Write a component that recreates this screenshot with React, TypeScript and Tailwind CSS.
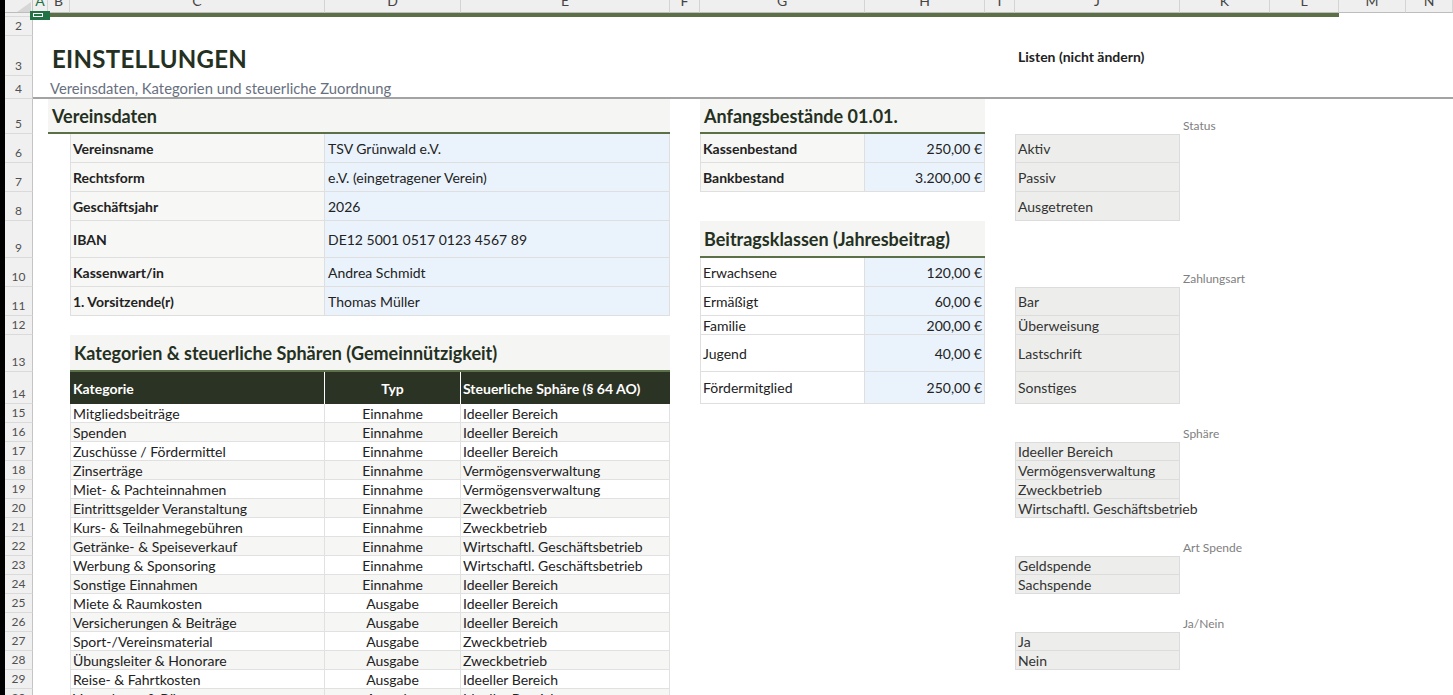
import type { ReactNode } from "react";

// column template: black strip, row header, A … N
const GRID =
  "grid grid-rows-1 *:row-start-1 grid-cols-[5px_28px_15px_22px_255px_136px_209px_30px_165px_120px_30px_165px_90px_69px_67px_1fr]";

const colLetters = ["A", "B", "C", "D", "E", "F", "G", "H", "I", "J", "K", "L", "M", "N"];

const secHead =
  "flex items-center whitespace-nowrap border-b-2 border-[#5b7047] bg-[#f5f5f3] px-[4px] text-[18px] leading-[22px] font-bold text-[#243021]";
const lbl =
  "flex items-center whitespace-nowrap border-b border-l border-r border-[#dfdfdf] bg-[#f7f7f5] px-[2px] text-[14px] leading-[17px] font-bold";
const lblPlain =
  "flex items-center whitespace-nowrap border-b border-l border-r border-[#dfdfdf] bg-white px-[2px] text-[14px] leading-[17px]";
const val =
  "flex items-center whitespace-nowrap border-b border-r border-[#dfdfdf] bg-[#eaf3fc] px-[3px] text-[14px] leading-[17px]";
const valR =
  "flex items-center justify-end whitespace-nowrap border-b border-r border-[#dfdfdf] bg-[#eaf3fc] px-[2px] text-[14px] leading-[17px]";
const listCell =
  "flex items-center whitespace-nowrap border-b border-l border-r border-[#dcdcdc] bg-[#edeeeb] px-[2px] text-[14px] leading-[17px] text-[#333]";
const listFirst =
  "flex items-center whitespace-nowrap border-t border-b border-l border-r border-[#dcdcdc] bg-[#edeeeb] px-[2px] text-[14px] leading-[17px] text-[#333]";
const smallLabel =
  "flex items-end whitespace-nowrap px-[3px] pb-[1px] text-[12px] leading-[14px] text-[#808080]";
const headCell = "flex items-center bg-[#2b3324] pt-[1px] text-[14px] leading-[17px] font-bold text-white";

const categories = [
  { n: 15, name: "Mitgliedsbeiträge", typ: "Einnahme", sphere: "Ideeller Bereich" },
  { n: 16, name: "Spenden", typ: "Einnahme", sphere: "Ideeller Bereich", note: "Sphäre" },
  { n: 17, name: "Zuschüsse / Fördermittel", typ: "Einnahme", sphere: "Ideeller Bereich", list: "Ideeller Bereich", first: true },
  { n: 18, name: "Zinserträge", typ: "Einnahme", sphere: "Vermögensverwaltung", list: "Vermögensverwaltung" },
  { n: 19, name: "Miet- & Pachteinnahmen", typ: "Einnahme", sphere: "Vermögensverwaltung", list: "Zweckbetrieb" },
  { n: 20, name: "Eintrittsgelder Veranstaltung", typ: "Einnahme", sphere: "Zweckbetrieb", list: "Wirtschaftl. Geschäftsbetrieb" },
  { n: 21, name: "Kurs- & Teilnahmegebühren", typ: "Einnahme", sphere: "Zweckbetrieb" },
  { n: 22, name: "Getränke- & Speiseverkauf", typ: "Einnahme", sphere: "Wirtschaftl. Geschäftsbetrieb", note: "Art Spende" },
  { n: 23, name: "Werbung & Sponsoring", typ: "Einnahme", sphere: "Wirtschaftl. Geschäftsbetrieb", list: "Geldspende", first: true },
  { n: 24, name: "Sonstige Einnahmen", typ: "Einnahme", sphere: "Ideeller Bereich", list: "Sachspende" },
  { n: 25, name: "Miete & Raumkosten", typ: "Ausgabe", sphere: "Ideeller Bereich" },
  { n: 26, name: "Versicherungen & Beiträge", typ: "Ausgabe", sphere: "Ideeller Bereich", note: "Ja/Nein" },
  { n: 27, name: "Sport-/Vereinsmaterial", typ: "Ausgabe", sphere: "Zweckbetrieb", list: "Ja", first: true },
  { n: 28, name: "Übungsleiter & Honorare", typ: "Ausgabe", sphere: "Zweckbetrieb", list: "Nein" },
  { n: 29, name: "Reise- & Fahrtkosten", typ: "Ausgabe", sphere: "Ideeller Bereich" },
  { n: 30, name: "Verwaltung & Büro", typ: "Ausgabe", sphere: "Ideeller Bereich" },
];

function Row({ n, h, children }: { n?: number; h: string; children?: ReactNode }) {
  return (
    <div className={`${GRID} ${h}`}>
      <div className="col-start-1 bg-black" />
      <div className="col-start-2 flex items-end justify-center border-r border-b border-r-[#c4c4c4] border-b-[#dadada] bg-[#f0f0f0] pb-[3px] text-[12px] leading-[13px] text-[#505050]">
        {n}
      </div>
      {children}
    </div>
  );
}

export default function App() {
  return (
    <div className="h-[695px] w-[1453px] overflow-hidden bg-white font-[Lato,sans-serif] text-[#222]">
      {/* column headers, cut at the top as in the sheet */}
      <div className={`${GRID} h-[13px]`}>
        <div className="bg-black" />
        <div className="flex items-end justify-end border-r border-b border-r-[#c4c4c4] border-b-[#bdbdbd] bg-[#efefef] pr-[1px]">
          <svg width="14" height="10" viewBox="0 0 14 10">
            <polygon points="14,0 14,10 0,10" fill="#d6d6d6" />
          </svg>
        </div>
        {colLetters.map((c) => (
          <div
            key={c}
            className={`flex items-end justify-center overflow-hidden border-r border-b border-r-[#d4d4d4] border-b-[#bdbdbd] bg-[#efefef] pb-[4px] text-[14px] leading-[14px] ${
              c === "A" ? "text-[#217346]" : "text-[#444]"
            }`}
          >
            {c}
          </div>
        ))}
      </div>

      {/* row 1: green band with cell selection */}
      <Row h="h-[4px]">
        <div className="relative col-start-3 col-span-12 bg-[#5b7047]">
          <div className="absolute -top-[2px] -left-[3px] z-10 h-[9px] w-[20px] bg-[#217346]">
            <div className="absolute top-[2px] left-[3px] h-[4px] w-[10px] border border-white" />
          </div>
        </div>
      </Row>

      <Row n={2} h="h-[19px]" />

      <Row n={3} h="h-[40px]">
        <div className="col-start-4 col-span-4 flex items-center whitespace-nowrap px-[4px] pt-[6px] text-[24px] font-bold tracking-[0.3px] text-[#243021]">
          EINSTELLUNGEN
        </div>
        <div className="col-start-12 col-span-2 flex items-center whitespace-nowrap px-[3px] text-[14px] font-bold">
          Listen (nicht ändern)
        </div>
      </Row>

      <Row n={4} h="h-[23px]">
        <div className="col-start-3 col-span-14 flex items-center whitespace-nowrap border-b-2 border-[#a3a3a3] pt-[2px] pl-[17px] text-[14.8px] leading-[18px] text-[#687080]">
          Vereinsdaten, Kategorien und steuerliche Zuordnung
        </div>
      </Row>

      <Row n={5} h="h-[35px]">
        <div className={`col-start-4 col-span-4 ${secHead}`}>Vereinsdaten</div>
        <div className={`col-start-9 col-span-2 ${secHead}`}>Anfangsbestände 01.01.</div>
        <div className={`col-start-13 ${smallLabel}`}>Status</div>
      </Row>

      <Row n={6} h="h-[29px]">
        <div className={`col-start-5 ${lbl}`}>Vereinsname</div>
        <div className={`col-start-6 col-span-2 ${val}`}>TSV Grünwald e.V.</div>
        <div className={`col-start-9 ${lbl}`}>Kassenbestand</div>
        <div className={`col-start-10 ${valR}`}>250,00 €</div>
        <div className={`col-start-12 ${listFirst}`}>Aktiv</div>
      </Row>

      <Row n={7} h="h-[29px]">
        <div className={`col-start-5 ${lbl}`}>Rechtsform</div>
        <div className={`col-start-6 col-span-2 ${val}`}>e.V. (eingetragener Verein)</div>
        <div className={`col-start-9 ${lbl}`}>Bankbestand</div>
        <div className={`col-start-10 ${valR}`}>3.200,00 €</div>
        <div className={`col-start-12 ${listCell}`}>Passiv</div>
      </Row>

      <Row n={8} h="h-[29px]">
        <div className={`col-start-5 ${lbl}`}>Geschäftsjahr</div>
        <div className={`col-start-6 col-span-2 ${val}`}>2026</div>
        <div className={`col-start-12 ${listCell}`}>Ausgetreten</div>
      </Row>

      <Row n={9} h="h-[37px]">
        <div className={`col-start-5 ${lbl}`}>IBAN</div>
        <div className={`col-start-6 col-span-2 ${val}`}>DE12 5001 0517 0123 4567 89</div>
        <div className={`col-start-9 col-span-2 ${secHead}`}>Beitragsklassen (Jahresbeitrag)</div>
      </Row>

      <Row n={10} h="h-[29px]">
        <div className={`col-start-5 ${lbl}`}>Kassenwart/in</div>
        <div className={`col-start-6 col-span-2 ${val}`}>Andrea Schmidt</div>
        <div className={`col-start-9 ${lblPlain}`}>Erwachsene</div>
        <div className={`col-start-10 ${valR}`}>120,00 €</div>
        <div className={`col-start-13 ${smallLabel}`}>Zahlungsart</div>
      </Row>

      <Row n={11} h="h-[29px]">
        <div className={`col-start-5 ${lbl}`}>1. Vorsitzende(r)</div>
        <div className={`col-start-6 col-span-2 ${val}`}>Thomas Müller</div>
        <div className={`col-start-9 ${lblPlain}`}>Ermäßigt</div>
        <div className={`col-start-10 ${valR}`}>60,00 €</div>
        <div className={`col-start-12 ${listFirst}`}>Bar</div>
      </Row>

      <Row n={12} h="h-[19px]">
        <div className={`col-start-9 ${lblPlain}`}>Familie</div>
        <div className={`col-start-10 ${valR}`}>200,00 €</div>
        <div className={`col-start-12 ${listCell}`}>Überweisung</div>
      </Row>

      <Row n={13} h="h-[37px]">
        <div className={`col-start-5 col-span-3 ${secHead}`}>Kategorien &amp; steuerliche Sphären (Gemeinnützigkeit)</div>
        <div className={`col-start-9 ${lblPlain}`}>Jugend</div>
        <div className={`col-start-10 ${valR}`}>40,00 €</div>
        <div className={`col-start-12 ${listCell}`}>Lastschrift</div>
      </Row>

      <Row n={14} h="h-[32px]">
        <div className={`col-start-5 border-r border-white px-[3px] ${headCell}`}>Kategorie</div>
        <div className={`col-start-6 justify-center border-r border-white ${headCell}`}>Typ</div>
        <div className={`col-start-7 whitespace-nowrap px-[2px] ${headCell}`}>Steuerliche Sphäre (§ 64 AO)</div>
        <div className={`col-start-9 ${lblPlain}`}>Fördermitglied</div>
        <div className={`col-start-10 ${valR}`}>250,00 €</div>
        <div className={`col-start-12 ${listCell}`}>Sonstiges</div>
      </Row>

      {categories.map((c) => (
        <Row key={c.n} n={c.n} h="h-[19px]">
          <div
            className={`col-start-5 flex items-center whitespace-nowrap border-b border-l border-r border-[#e1e1e1] px-[2px] text-[14px] leading-[17px] ${
              c.n % 2 === 0 ? "bg-[#f6f6f4]" : "bg-white"
            }`}
          >
            {c.name}
          </div>
          <div
            className={`col-start-6 flex items-center justify-center border-b border-r border-[#e1e1e1] text-[14px] leading-[17px] ${
              c.n % 2 === 0 ? "bg-[#f6f6f4]" : "bg-white"
            }`}
          >
            {c.typ}
          </div>
          <div
            className={`col-start-7 flex items-center whitespace-nowrap border-b border-r border-[#e1e1e1] px-[2px] text-[14px] leading-[17px] ${
              c.n % 2 === 0 ? "bg-[#f6f6f4]" : "bg-white"
            }`}
          >
            {c.sphere}
          </div>
          {c.list ? <div className={`col-start-12 ${c.first ? listFirst : listCell}`}>{c.list}</div> : null}
          {c.note ? <div className={`col-start-13 ${smallLabel}`}>{c.note}</div> : null}
        </Row>
      ))}
    </div>
  );
}
